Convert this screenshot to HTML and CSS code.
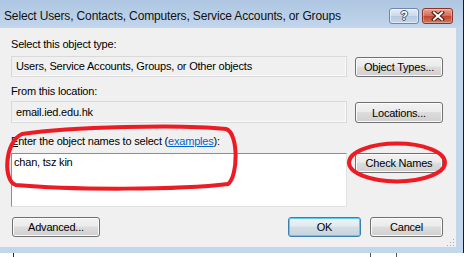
FILE: index.html
```html
<!DOCTYPE html>
<html lang="en">
<head>
    <meta charset="UTF-8">
    <title>Select Users, Contacts, Computers, Service Accounts, or Groups</title>
    <link rel="stylesheet" href="styles.css">
</head>
<body>

<div class="window">
    <!-- title bar -->
    <div class="titlebar">
        <span class="title">Select Users, Contacts, Computers, Service Accounts, or Groups</span>
        <div class="caption-btns">
            <div class="cap-btn help">?</div>
            <div class="cap-btn close">
                <svg width="14" height="10" viewBox="0 0 14 10">
                    <path d="M3 1.5 L11 8.5 M11 1.5 L3 8.5" stroke="#4a1810" stroke-width="4" stroke-linecap="square"/>
                    <path d="M3 1.5 L11 8.5 M11 1.5 L3 8.5" stroke="#fff" stroke-width="2" stroke-linecap="square"/>
                </svg>
            </div>
        </div>
    </div>

    <!-- dialog body -->
    <div class="client">
        <div class="label lbl-type">Select this object type:</div>
        <div class="row row-type">
            <div class="field">Users, Service Accounts, Groups, or Other objects</div>
            <button class="btn">Object Types...</button>
        </div>

        <div class="label lbl-loc">From this location:</div>
        <div class="row row-loc">
            <div class="field tall">email.ied.edu.hk</div>
            <button class="btn">Locations...</button>
        </div>

        <div class="label lbl-names"><u>E</u>nter the object names to select (<a href="#" class="link">examples</a>):</div>
        <div class="row row-names">
            <div class="names-box">chan, tsz kin</div>
            <button class="btn">Check Names</button>
        </div>

        <div class="footer">
            <button class="btn">Advanced...</button>
            <div class="footer-right">
                <button class="btn btn-default">OK</button>
                <button class="btn btn-cancel">Cancel</button>
            </div>
        </div>

        <svg class="grip" width="10" height="10" viewBox="0 0 10 10">
            <rect x="8" y="2" width="1" height="1" fill="#a8a8a8"/>
            <rect x="5" y="5" width="1" height="1" fill="#a8a8a8"/>
            <rect x="8" y="5" width="1" height="1" fill="#a8a8a8"/>
            <rect x="2" y="8" width="1" height="1" fill="#a8a8a8"/>
            <rect x="5" y="8" width="1" height="1" fill="#a8a8a8"/>
            <rect x="8" y="8" width="1" height="1" fill="#a8a8a8"/>
        </svg>
    </div>

    <!-- hand drawn red marks on the screenshot -->
    <svg class="marks" width="464" height="257" viewBox="0 0 464 257">
        <path d="M22 134 C70 127 180 124 226 129 C239 133 238 177 228 184 C180 190 70 190 16 185 C3 182 4 142 22 134 Z"
              fill="none" stroke="#ed1c24" stroke-width="4"/>
        <ellipse cx="397" cy="162.5" rx="48" ry="19" fill="none" stroke="#ed1c24" stroke-width="4"/>
    </svg>
</div>

</body>
</html>
```

FILE: styles.css
```css
html, body {
    margin: 0;
    height: 100%;
}
body {
    font-family: "Liberation Sans", Arial, sans-serif;
    font-size: 11px;
    letter-spacing: -0.2px;
    color: #000;
    background:
        linear-gradient(to right, transparent 13px, #2a2a2a 13px, #2a2a2a 14px, transparent 14px),
        linear-gradient(to right, transparent 370px, #555 370px, #555 371px, transparent 371px),
        linear-gradient(to right, transparent 396px, #555 396px, #555 397px, transparent 397px),
        #fff;
    overflow: hidden;
}
.window {
    position: relative;
    width: 463px;
    height: 253px;
    border-right: 1px solid #1c1c1c;
    background-color: #c2d6ec;
    display: flex;
    flex-direction: column;
}
.titlebar {
    height: 28px;
    flex: none;
    display: flex;
    justify-content: space-between;
    padding: 0 10px 0 4px;
    background: linear-gradient(#aec6e1, #c2d6ec);
}
.title {
    font-size: 12px;
    letter-spacing: -0.15px;
    line-height: 14px;
    padding-top: 9px;
    color: #111;
    white-space: nowrap;
}
.caption-btns {
    display: flex;
    gap: 3px;
    padding-top: 8px;
}
.cap-btn {
    box-sizing: border-box;
    height: 16px;
    border-radius: 3px;
    display: flex;
    align-items: center;
    justify-content: center;
}
.help {
    width: 30px;
    border: 1px solid #6f87a8;
    background: linear-gradient(#e4edf7, #cbd9ea 50%, #b6c9e0 51%, #c4d6ea);
    box-shadow: inset 0 0 0 1px rgba(255, 255, 255, 0.5);
    color: #fff;
    font-weight: bold;
    font-size: 12px;
    text-shadow: 1px 0 #3d4f6a, -1px 0 #3d4f6a, 0 1px #3d4f6a, 0 -1px #3d4f6a;
}
.close {
    width: 31px;
    border: 1px solid #8a3324;
    background: linear-gradient(#e8a596, #d46a56 50%, #c4432e 51%, #d07a60);
    box-shadow: inset 0 0 0 1px rgba(255, 255, 255, 0.3);
}

.client {
    position: relative;
    flex: 1;
    margin: 0 7px 6px 0;
    padding: 10px 13px 0 11px;
    background-color: #f0f0f0;
}
.label {
    line-height: 13px;
    white-space: nowrap;
}
.lbl-loc {
    margin-top: 8px;
}
.lbl-names {
    margin-top: 12px;
}
.link {
    color: #0066cc;
}
.row {
    display: flex;
    align-items: flex-end;
    gap: 8px;
}
.row-type {
    margin-top: 5px;
}
.row-loc {
    margin-top: 3px;
}
.row-names {
    margin-top: 5px;
    align-items: flex-start;
}
.field {
    box-sizing: border-box;
    width: 336px;
    height: 21px;
    line-height: 19px;
    padding-left: 4px;
    border: 1px solid #d9d9d9;
    box-shadow: inset -1px -1px 0 #fbfbfb;
    white-space: nowrap;
}
.field.tall {
    height: 22px;
    line-height: 20px;
}
.names-box {
    box-sizing: border-box;
    width: 336px;
    height: 54px;
    padding: 2px 2px;
    line-height: 13px;
    background-color: #fff;
    border: 1px solid;
    border-color: #8e8e8e #e3e3e3 #e3e3e3 #8e8e8e;
}
.btn {
    box-sizing: border-box;
    width: 88px;
    height: 20px;
    padding: 0;
    font-family: inherit;
    font-size: 11px;
    letter-spacing: -0.2px;
    color: #000;
    border: 1px solid #707070;
    border-radius: 3px;
    background: linear-gradient(#f2f2f2, #ebebeb 45%, #dddddd 50%, #cfcfcf);
    box-shadow: inset 0 0 0 1px #fbfbfb;
}
.row-loc .btn {
    height: 21px;
}
.footer {
    margin-top: 10px;
    display: flex;
    justify-content: space-between;
}
.footer .btn {
    margin-left: 1px;
}
.footer-right {
    display: flex;
    gap: 8px;
}
.btn-default {
    width: 73px;
    border-color: #3c7fb1;
    background: linear-gradient(#eef3f6, #e2eaf0 45%, #d3dde5 50%, #c7d4de);
    box-shadow: inset 0 0 0 1px #5ccbf4;
}
.btn-cancel {
    width: 73px;
}
.grip {
    position: absolute;
    right: 1px;
    bottom: 0;
}
.marks {
    position: absolute;
    left: 0;
    top: 0;
    pointer-events: none;
}
```
